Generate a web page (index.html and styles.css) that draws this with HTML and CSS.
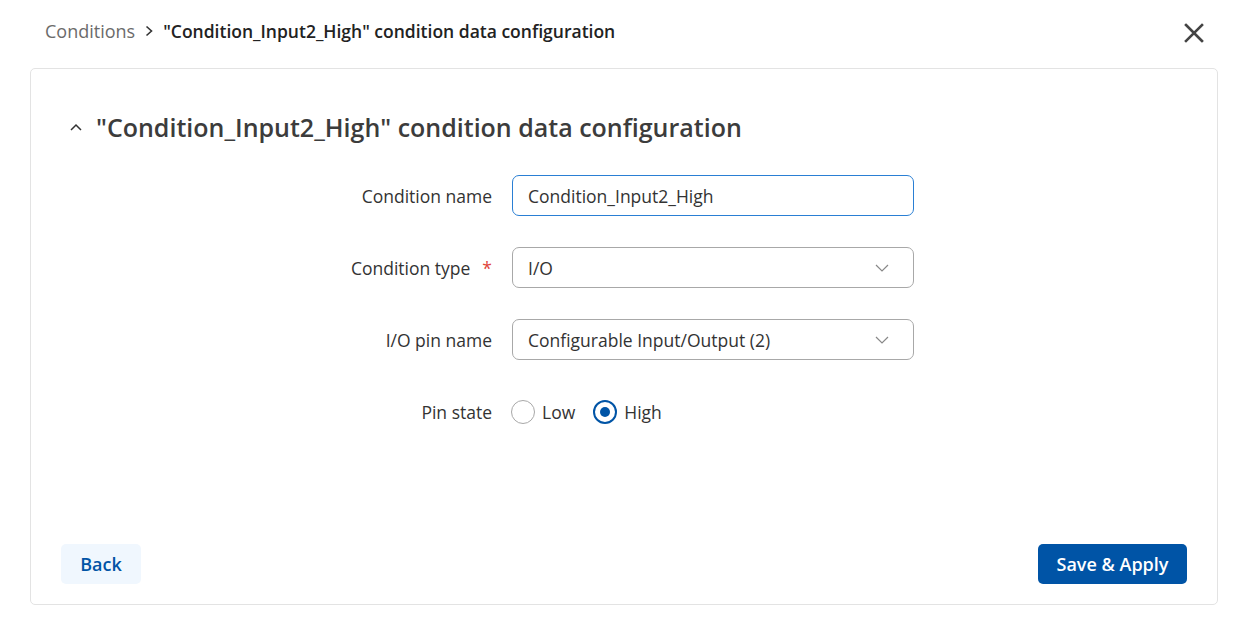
FILE: index.html
```html
<!DOCTYPE html>
<html>
<head>
<meta charset="utf-8">
<link rel="stylesheet" href="styles.css">
</head>
<body>
<div class="page">
  <header class="topbar">
    <nav class="crumbs">
      <span class="crumb-link">Conditions</span>
      <svg class="crumb-sep" width="12" height="14" viewBox="0 0 12 14"><path d="M3.5 2.5 L8.5 7 L3.5 11.5" fill="none" stroke="#333" stroke-width="1.6"/></svg>
      <span class="crumb-current">"Condition_Input2_High" condition data configuration</span>
    </nav>
    <button class="close" aria-label="Close">
      <svg width="20" height="20" viewBox="0 0 20 20"><path d="M2 2 L18 18 M18 2 L2 18" stroke="#444" stroke-width="2.6" stroke-linecap="square"/></svg>
    </button>
  </header>
  <section class="card">
    <h2 class="section-title">
      <svg class="caret" width="14" height="10" viewBox="0 0 14 10"><path d="M2 8 L7 3 L12 8" fill="none" stroke="#333" stroke-width="1.5"/></svg>
      <span>"Condition_Input2_High" condition data configuration</span>
    </h2>
    <div class="form">
      <div class="row">
        <label class="label">Condition name</label>
        <div class="field"><div class="input focused">Condition_Input2_High</div></div>
      </div>
      <div class="row">
        <label class="label">Condition type<span class="req">*</span></label>
        <div class="field"><div class="input select">I/O<svg class="chev" width="16" height="10" viewBox="0 0 16 10"><path d="M2 2 L8 8 L14 2" fill="none" stroke="#888" stroke-width="1.2"/></svg></div></div>
      </div>
      <div class="row">
        <label class="label">I/O pin name</label>
        <div class="field"><div class="input select">Configurable Input/Output (2)<svg class="chev" width="16" height="10" viewBox="0 0 16 10"><path d="M2 2 L8 8 L14 2" fill="none" stroke="#888" stroke-width="1.2"/></svg></div></div>
      </div>
      <div class="row">
        <label class="label">Pin state</label>
        <div class="field radios">
          <span class="radio-opt"><span class="radio"></span>Low</span>
          <span class="radio-opt"><span class="radio checked"></span>High</span>
        </div>
      </div>
    </div>
    <div class="actions">
      <button class="btn btn-back">Back</button>
      <button class="btn btn-primary">Save &amp; Apply</button>
    </div>
  </section>
</div>
</body>
</html>
```
FILE: styles.css
```css
* { box-sizing: border-box; }
html, body { margin: 0; padding: 0; background: #fff; }
body { font-family: "Open Sans", "Noto Sans", sans-serif; color: #404040; }
.page { width: 1239px; height: 628px; padding: 0 21px 0 30px; display: flex; flex-direction: column; }
.topbar { height: 68px; display: flex; align-items: center; justify-content: space-between; padding: 0 14px 0 15px; }
.crumbs { display: flex; align-items: center; font-size: 17.5px; margin-top: -6px; }
.crumb-link { color: #6b6b6b; font-size: 18px; }
.crumb-sep { margin: 0 8px 0 8px; }
.crumb-current { color: #222; font-weight: 600; }
.close { background: none; border: 0; padding: 0; width: 20px; height: 20px; display: flex; margin-top: -2px; }
.card { border: 1px solid #e3e3e3; border-radius: 5px; height: 537px; padding: 0 30px 20px 30px; display: flex; flex-direction: column; }
.section-title { margin: 41px 0 0 8px; display: flex; align-items: center; font-size: 25px; font-weight: 600; color: #3c3c3c; height: 34px; }
.caret { margin-right: 13px; margin-top: 0px; }
.form { margin-top: 31px; display: flex; flex-direction: column; gap: 31px; }
.row { display: flex; align-items: center; height: 41px; }
.label { width: 451px; text-align: right; font-size: 17.5px; color: #333; padding-right: 20px; flex: none; }
.req { color: #e0463c; margin-left: 12px; }
.field { width: 402px; }
.input { height: 41px; border: 1px solid #a8a8a8; border-radius: 7px; padding: 0 15px; font-size: 17.5px; color: #333; display: flex; align-items: center; justify-content: space-between; }
.input.focused { border-color: #2a7fd4; }
.chev { margin-right: 8px; }
.radios { display: flex; align-items: center; gap: 18px; font-size: 17.5px; color: #333; margin-left: -1px; }
.radio-opt { display: flex; align-items: center; gap: 7px; }
.radio { width: 24px; height: 24px; border-radius: 50%; border: 1px solid #a8a8a8; display: inline-block; position: relative; }
.radio.checked { border: 2px solid #0054a6; }
.radio.checked::after { content: ""; position: absolute; left: 5px; top: 5px; width: 10px; height: 10px; border-radius: 50%; background: #0054a6; }
.actions { margin-top: auto; display: flex; justify-content: space-between; }
.btn { height: 40px; border: 0; border-radius: 5px; font-family: inherit; font-size: 18px; font-weight: 600; padding: 0; white-space: nowrap; }
.btn-back { background: #f0f7fe; color: #0054a6; width: 80px; }
.btn-primary { background: #0054a6; color: #fff; width: 149px; }
```
